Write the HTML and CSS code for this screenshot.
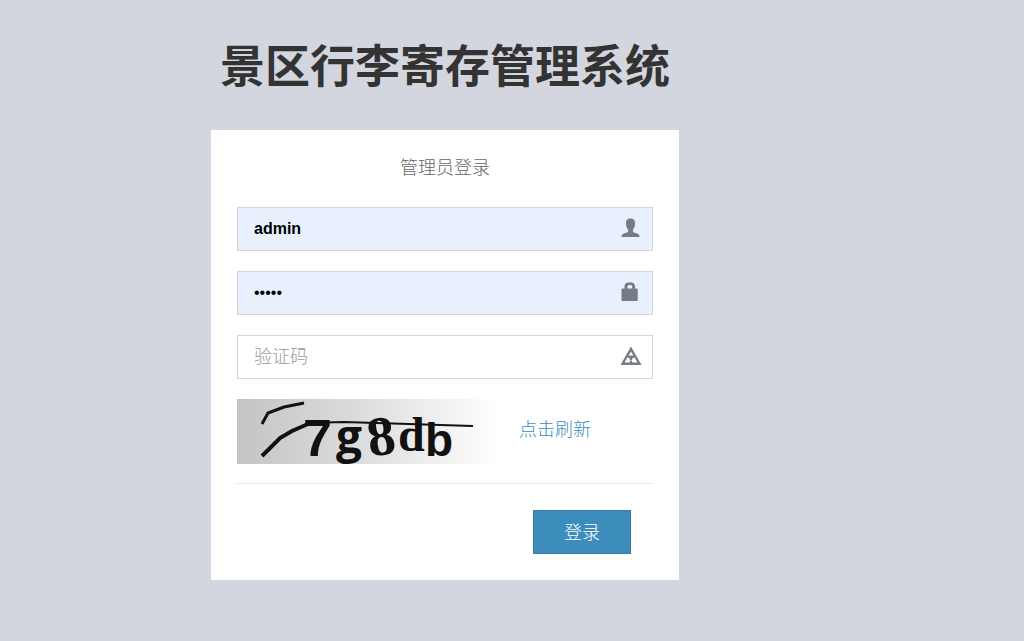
FILE: index.html
```html
<!DOCTYPE html>
<html lang="zh-CN">
<head>
<meta charset="UTF-8">
<meta name="viewport" content="width=device-width, initial-scale=1">
<title>景区行李寄存管理系统</title>
<link rel="stylesheet" href="styles.css">
</head>
<body>

<div class="login-box">
  <h1 class="login-logo">景区行李寄存管理系统</h1>

  <div class="login-box-body">
    <p class="login-box-msg">管理员登录</p>

    <form onsubmit="return false">
      <div class="form-group">
        <input type="text" class="form-control filled" value="admin" aria-label="用户名">
        <svg class="feedback" viewBox="0 0 22 22" aria-hidden="true">
          <path d="M10.500 1.500C7.500 1.500 5.800 3 6 6.500c0 2.500.7 4.500 2 6v2c0 1-3 1.300-5 2.500-.9.700-1.500 1.300-1.500 3h18c0-1.700-.6-2.300-1.500-3-2-1.200-5-1.500-5-2.500v-2c1.300-1.500 2-3.500 2-6C15.200 3 13.500 1.500 10.500 1.500z"/>
        </svg>
      </div>
      <div class="form-group">
        <input type="password" class="form-control filled" value="admin" aria-label="密码">
        <svg class="feedback" viewBox="0 0 22 22" aria-hidden="true">
          <path fill-rule="evenodd" d="M4.500 7.500V5Q5 1.500 8 1.500h3.500Q14.500 1.500 15 5v2.500h2q.7 0 .7 1v10.500q0 1-1 1H2.500q-1 0-1-1V8.500q0-1 1-1zM7.500 7.500h4.700V5.500Q12 4 11 4H9Q7.500 4 7.500 5.500z"/>
        </svg>
      </div>
      <div class="form-group">
        <input type="text" class="form-control" placeholder="验证码" aria-label="验证码">
        <svg class="feedback" viewBox="0 0 22 22" aria-hidden="true">
          <path fill-rule="evenodd" d="M11 1.500l10.500 18.500H.5zM11 6.500L4.500 17.500h13z"/>
          <path d="M8 10.500h6v2.500h-1.500l-.5 2.500h-2l-.5-2.500H8zM10 16h2.200v2H10z"/>
        </svg>
      </div>

      <div class="captcha-row">
        <svg class="captcha" viewBox="0 0 260 65" role="img" aria-label="验证码图片">
          <defs>
            <linearGradient id="captchaBg">
              <stop offset="0" stop-color="#c4c4c4"/>
              <stop offset="0.5" stop-color="#dedede"/>
              <stop offset="1" stop-color="#ffffff"/>
            </linearGradient>
          </defs>
          <rect width="260" height="65" fill="url(#captchaBg)"/>
          <g class="captcha-text">
            <text x="66" y="57" class="seven">7</text>
            <text x="99" y="54" class="gee">g</text>
            <text x="130" y="56" transform="rotate(-8 144 38)" class="eight">8</text>
            <text x="161" y="52" class="dee">d</text>
            <text x="188" y="57" class="bee">b</text>
          </g>
          <g class="captcha-noise">
            <path d="M25 25l6-11 16-6 20-4" stroke-width="3"/>
            <path d="M25 57l18-18 12-7 16-7" stroke-width="4"/>
            <path d="M69 24l38-1 129 4" stroke-width="2"/>
          </g>
        </svg>
        <a href="#" class="refresh">点击刷新</a>
      </div>

      <div class="actions">
        <button type="submit" class="btn">登录</button>
      </div>
    </form>
  </div>
</div>

</body>
</html>
```
FILE: styles.css
```css
* {
  box-sizing: border-box;
}
body {
  margin: 0;
  background: #d3d6de;
  color: #333;
  font-family: "Liberation Sans", "Noto Sans CJK SC", sans-serif;
  font-size: 18px;
  font-weight: 300;
}
.login-box {
  width: 468px;
  max-width: 100%;
  margin: 38px 0 0 211px;
}
.login-logo {
  margin: 0 0 32px;
  font-size: 45px;
  line-height: 60px;
  font-weight: bold;
  text-align: center;
  white-space: nowrap;
}
.login-box-body {
  padding: 26px;
  background: #fff;
  color: #666;
}
.login-box-msg {
  margin: 0 0 27px;
  line-height: 24px;
  text-align: center;
}
.form-group {
  position: relative;
  margin-bottom: 20px;
}
.form-control {
  display: block;
  width: 100%;
  height: 44px;
  padding: 0 48px 0 16px;
  border: 1px solid #d2d6de;
  border-radius: 0;
  background: #fff;
  color: #000;
  font-family: inherit;
  font-size: 18px;
  font-weight: 300;
}
.form-control.filled {
  background: #e8f0fe;
  font-size: 16px;
}
.form-control.filled[type="text"] {
  font-weight: bold;
}
.form-control::placeholder {
  color: #999;
}
.feedback {
  position: absolute;
  top: 10px;
  right: 11px;
  width: 22px;
  height: 22px;
  fill: #777b83;
  pointer-events: none;
}
.captcha-row {
  display: flex;
  align-items: center;
  gap: 22px;
  padding-bottom: 19px;
  border-bottom: 1px solid #e4e4e4;
}
.captcha {
  width: 260px;
  height: 65px;
  overflow: visible;
}
.captcha-text {
  fill: #111;
  font-weight: bold;
}
.seven {
  font-family: "Liberation Sans", sans-serif;
  font-size: 52px;
}
.gee {
  font-family: "Open Sans", sans-serif;
  font-size: 46px;
}
.eight {
  font-family: "Liberation Serif", serif;
  font-size: 56px;
}
.dee {
  font-family: "Liberation Serif", serif;
  font-size: 48px;
}
.bee {
  font-family: "Liberation Sans", sans-serif;
  font-size: 46px;
}
.captcha-noise {
  fill: none;
  stroke: #111;
}
.refresh {
  padding-bottom: 8px;
  color: #3c8dbc;
  text-decoration: none;
}
.actions {
  display: flex;
  justify-content: flex-end;
  padding: 26px 22px 0 0;
}
.btn {
  width: 98px;
  height: 44px;
  padding: 0 0 2px;
  border: 1px solid #367fa9;
  background: #3c8dbc;
  color: #fff;
  font-family: inherit;
  font-size: 18px;
  font-weight: 300;
  cursor: pointer;
}
.btn:hover {
  background: #367fa9;
}
```
